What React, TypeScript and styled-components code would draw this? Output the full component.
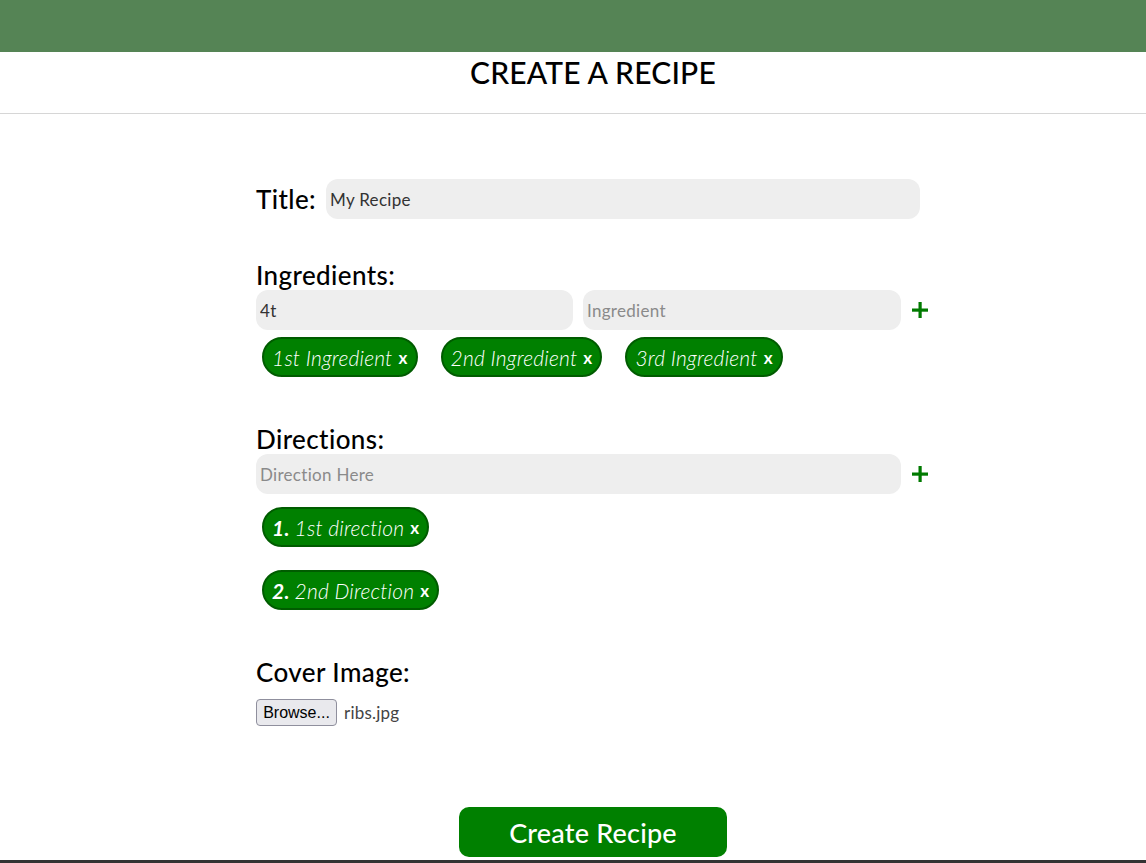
import React from "react";
import styled, { createGlobalStyle } from "styled-components";

const FONT = `"Lato", "Noto Sans", sans-serif`;

const Global = createGlobalStyle`
  html, body { margin: 0; padding: 0; background: #fff; }
  body { font-family: ${FONT}; color: #000; }
  * { box-sizing: border-box; }
`;

const Page = styled.div`
  width: 1146px;
  height: 863px;
  overflow: hidden;
  display: flex;
  flex-direction: column;
`;

const TopBar = styled.div`
  height: 52px;
  background: #558455;
  flex-shrink: 0;
`;

const TitleBar = styled.div`
  height: 62px;
  border-bottom: 1px solid #d6d6d6;
  display: flex;
  justify-content: center;
  padding-left: 40px;
  flex-shrink: 0;
`;

const PageTitle = styled.h1`
  margin: 2px 0 0;
  font-size: 30px;
  font-weight: 500;
  line-height: 36px;
  letter-spacing: 0.2px;
`;

const Main = styled.main`
  flex: 1;
  padding-left: 40px;
  display: flex;
  justify-content: center;
`;

const Form = styled.form`
  width: 674px;
  display: flex;
  flex-direction: column;
  padding-top: 65px;
`;

const InlineRow = styled.div`
  display: flex;
  align-items: center;
  gap: 10px;
`;

const Label = styled.label`
  font-size: 26px;
  font-weight: 500;
  line-height: 28px;
  letter-spacing: 0.4px;
  display: block;
`;

const Section = styled.section<{ $mt: number }>`
  margin-top: ${(p) => p.$mt}px;
  display: flex;
  flex-direction: column;
`;

const Input = styled.input<{ $w?: number }>`
  height: 40px;
  border: none;
  border-radius: 12px;
  background: #eeeeee;
  font-family: ${FONT};
  font-size: 17px;
  letter-spacing: 0.3px;
  color: #333;
  padding: 0 4px;
  outline: none;
  width: ${(p) => (p.$w ? `${p.$w}px` : "auto")};
  &::placeholder { color: #8a8a8a; }
`;

const InputRow = styled.div`
  display: flex;
  align-items: center;
  gap: 10px;
  margin-top: 1px;
`;

const PlusBtn = styled.button`
  border: none;
  background: none;
  padding: 0;
  width: 18px;
  height: 18px;
  display: flex;
  align-items: center;
  justify-content: center;
  cursor: pointer;
`;

const ChipRow = styled.div<{ $mt: number }>`
  display: flex;
  gap: 23px;
  margin-top: ${(p) => p.$mt}px;
  padding-left: 6px;
`;

const ChipList = styled.div`
  display: flex;
  flex-direction: column;
  align-items: flex-start;
  gap: 23px;
  margin-top: 13px;
  padding-left: 6px;
`;

const Chip = styled.div`
  height: 40px;
  border-radius: 20px;
  background: #008000;
  border: 2px solid #005c00;
  color: #fff;
  display: inline-flex;
  align-items: center;
  padding: 0 8px 0 8px;
  font-size: 21px;
  letter-spacing: 0.2px;
  font-style: italic;
  font-weight: 300;
  white-space: nowrap;
`;

const Num = styled.b`
  font-weight: 700;
  margin-right: 5px;
`;

const X = styled.span`
  font-style: normal;
  font-weight: 700;
  font-size: 17px;
  margin-left: 6px;
`;

const FileRow = styled.div`
  display: flex;
  align-items: center;
  gap: 7px;
  margin-top: 13px;
`;

const Browse = styled.button`
  height: 27px;
  width: 81px;
  font-family: "Liberation Sans", Arial, sans-serif;
  font-size: 16px;
  background: #e9e9ed;
  border: 1px solid #8f8f9d;
  border-radius: 4px;
  color: #000;
  padding: 0;
`;

const FileName = styled.span`
  font-size: 17px;
  letter-spacing: 0.2px;
  color: #444;
`;

const Submit = styled.button`
  align-self: center;
  margin-top: 81px;
  width: 268px;
  height: 50px;
  border: none;
  border-radius: 10px;
  background: #008000;
  color: #fff;
  font-family: ${FONT};
  font-size: 27px;
  font-weight: 500;
  letter-spacing: 0.2px;
`;

const Footer = styled.div`
  height: 3px;
  background: #333;
  flex-shrink: 0;
`;

const Plus = () => (
  <PlusBtn type="button" aria-label="add">
    <svg width="18" height="18" viewBox="0 0 18 18">
      <rect x="7.5" y="1" width="3.2" height="16" fill="#007a00" />
      <rect x="1" y="7.5" width="16" height="3.2" fill="#007a00" />
    </svg>
  </PlusBtn>
);

export default function App() {
  return (
    <Page>
      <Global />
      <TopBar />
      <TitleBar>
        <PageTitle>CREATE A RECIPE</PageTitle>
      </TitleBar>
      <Main>
        <Form onSubmit={(e) => e.preventDefault()}>
          <InlineRow>
            <Label>Title:</Label>
            <Input $w={594} defaultValue="My Recipe" />
          </InlineRow>

          <Section $mt={42}>
            <Label>Ingredients:</Label>
            <InputRow>
              <Input $w={317} defaultValue="4t" />
              <Input $w={318} placeholder="Ingredient" />
              <Plus />
            </InputRow>
            <ChipRow $mt={7}>
              <Chip>1st Ingredient<X>x</X></Chip>
              <Chip>2nd Ingredient<X>x</X></Chip>
              <Chip>3rd Ingredient<X>x</X></Chip>
            </ChipRow>
          </Section>

          <Section $mt={48}>
            <Label>Directions:</Label>
            <InputRow>
              <Input $w={645} placeholder="Direction Here" />
              <Plus />
            </InputRow>
            <ChipList>
              <Chip><Num>1.</Num>1st direction<X>x</X></Chip>
              <Chip><Num>2.</Num>2nd Direction<X>x</X></Chip>
            </ChipList>
          </Section>

          <Section $mt={48}>
            <Label>Cover Image:</Label>
            <FileRow>
              <Browse type="button">Browse...</Browse>
              <FileName>ribs.jpg</FileName>
            </FileRow>
          </Section>

          <Submit type="submit">Create Recipe</Submit>
        </Form>
      </Main>
      <Footer />
    </Page>
  );
}
